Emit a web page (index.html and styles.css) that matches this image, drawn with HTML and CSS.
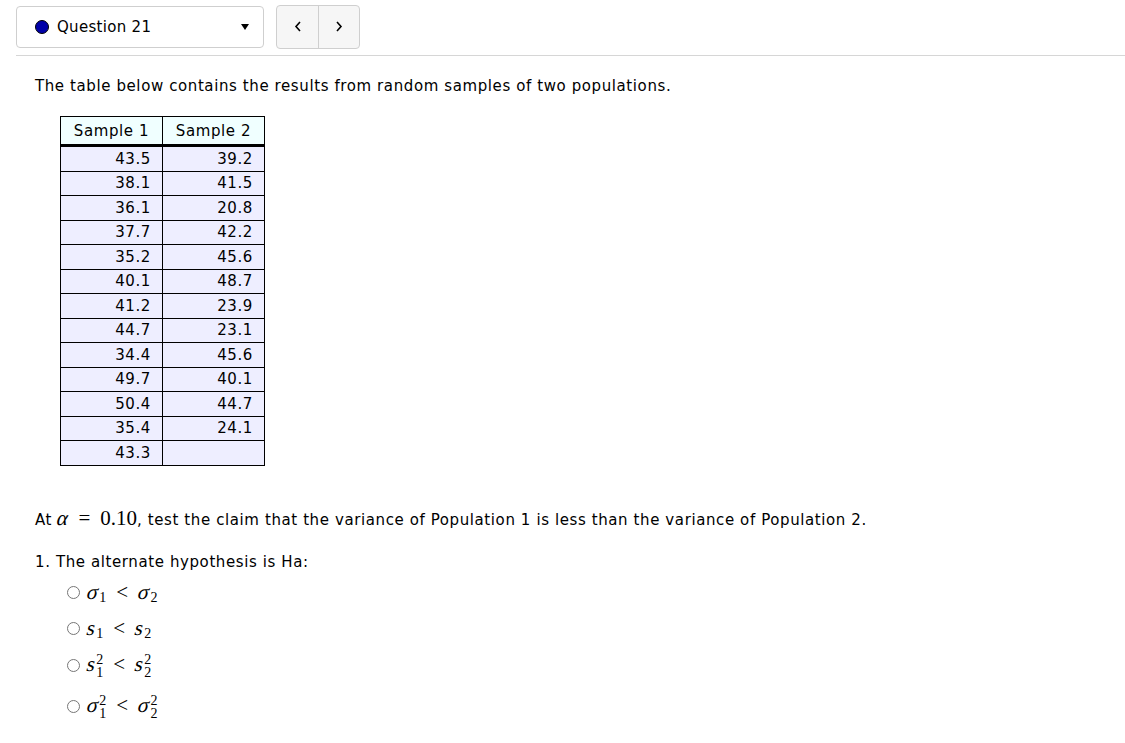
FILE: index.html
```html
<!DOCTYPE html>
<html lang="en">
<head>
    <meta charset="UTF-8">
    <title>Question 21</title>
    <link rel="stylesheet" href="styles.css">
</head>
<body>
    <div class="topbar">
        <div class="qselect">
            <span class="dot"></span>
            <span class="qname">Question 21</span>
            <span class="caret"></span>
        </div>
        <div class="nav">
            <button class="navbtn" aria-label="Previous">
                <svg width="8" height="11" viewBox="0 0 8 11"><polyline points="6,1 2,5.5 6,10" fill="none" stroke="#000" stroke-width="1.6"/></svg>
            </button>
            <button class="navbtn" aria-label="Next">
                <svg width="8" height="11" viewBox="0 0 8 11"><polyline points="2,1 6,5.5 2,10" fill="none" stroke="#000" stroke-width="1.6"/></svg>
            </button>
        </div>
    </div>

    <div class="question">
        <p class="intro">The table below contains the results from random samples of two populations.</p>

        <table class="data">
            <thead>
                <tr><th>Sample 1</th><th>Sample 2</th></tr>
            </thead>
            <tbody>
                <tr><td>43.5</td><td>39.2</td></tr>
                <tr><td>38.1</td><td>41.5</td></tr>
                <tr><td>36.1</td><td>20.8</td></tr>
                <tr><td>37.7</td><td>42.2</td></tr>
                <tr><td>35.2</td><td>45.6</td></tr>
                <tr><td>40.1</td><td>48.7</td></tr>
                <tr><td>41.2</td><td>23.9</td></tr>
                <tr><td>44.7</td><td>23.1</td></tr>
                <tr><td>34.4</td><td>45.6</td></tr>
                <tr><td>49.7</td><td>40.1</td></tr>
                <tr><td>50.4</td><td>44.7</td></tr>
                <tr><td>35.4</td><td>24.1</td></tr>
                <tr><td>43.3</td><td></td></tr>
            </tbody>
        </table>

        <p class="claim">At <span class="m"><span class="v">α</span><span class="op">=</span>0.10</span>, test the claim that the variance of Population 1 is less than the variance of Population 2.</p>

        <p class="part">1. The alternate hypothesis is Ha:</p>

        <ul class="choices">
            <li><span class="radio"></span><span class="m"><span class="v">σ</span><span class="sb">1</span><span class="op">&lt;</span><span class="v">σ</span><span class="sb">2</span></span></li>
            <li><span class="radio"></span><span class="m"><span class="v">s</span><span class="sb">1</span><span class="op">&lt;</span><span class="v">s</span><span class="sb">2</span></span></li>
            <li class="tall"><span class="radio"></span><span class="m"><span class="v">s</span><span class="ss"><span>2</span><span>1</span></span><span class="op">&lt;</span><span class="v">s</span><span class="ss"><span>2</span><span>2</span></span></span></li>
            <li class="taller"><span class="radio"></span><span class="m"><span class="v">σ</span><span class="ss"><span>2</span><span>1</span></span><span class="op">&lt;</span><span class="v">σ</span><span class="ss"><span>2</span><span>2</span></span></span></li>
        </ul>
    </div>
</body>
</html>
```

FILE: styles.css
```css
body {
    font-family: "DejaVu Sans", Verdana, sans-serif;
    font-size: 15px;
    letter-spacing: 0.6px;
    color: #000;
    background-color: #fff;
    margin: 0;
    padding: 5px 0 0 16px;
}

.topbar {
    display: flex;
    align-items: center;
    gap: 12px;
    padding-bottom: 6px;
    border-bottom: 1px solid #d6d6d6;
}

.qselect {
    display: flex;
    align-items: center;
    width: 248px;
    height: 42px;
    box-sizing: border-box;
    padding: 0 14px 0 18px;
    border: 1px solid #cfcfcf;
    border-radius: 4px;
}

.dot {
    width: 12px;
    height: 12px;
    border: 1px solid #000;
    border-radius: 50%;
    background-color: #0000a8;
    margin-right: 8px;
}

.qname {
    flex: 1;
    letter-spacing: 0.3px;
}

.caret {
    width: 0;
    height: 0;
    border-left: 4px solid transparent;
    border-right: 4px solid transparent;
    border-top: 6px solid #000;
}

.nav {
    display: flex;
    height: 42px;
    border: 1px solid #cfcfcf;
    border-radius: 4px;
    background-color: #f6f6f6;
    overflow: hidden;
}

.navbtn {
    display: flex;
    align-items: center;
    justify-content: center;
    width: 41px;
    border: none;
    background: none;
    padding: 0 0 1px 0;
}

.navbtn + .navbtn {
    border-left: 1px solid #cfcfcf;
}

.question {
    padding-left: 19px;
}

.intro {
    margin: 21px 0 21px 0;
}

.data {
    margin-left: 25px;
    border-collapse: collapse;
}

.data th {
    background-color: #f0ffff;
    font-weight: normal;
    width: 101px;
    height: 27px;
    padding: 0;
    border: 1px solid #000;
    border-bottom: 3px solid #000;
    text-align: center;
}

.data td {
    background-color: #eeeeff;
    border: 1px solid #000;
    height: 23.5px;
    padding: 0 11px 0 0;
    text-align: right;
}

.claim {
    margin: 40px 0 0 0;
}

.part {
    margin: 22px 0 0 0;
}

.m {
    font-family: "Liberation Serif", "DejaVu Serif", serif;
    font-size: 21px;
    letter-spacing: 0;
}

.v {
    display: inline-block;
    transform: skewX(-14deg);
}

.op {
    margin: 0 10px;
}

.sb {
    font-size: 14px;
    vertical-align: -3px;
    margin-left: 1px;
}

.ss {
    display: inline-flex;
    flex-direction: column;
    vertical-align: 7px;
    font-size: 14px;
    line-height: 13px;
    margin-left: 1px;
}

.choices {
    list-style: none;
    margin: 4px 0 0 0;
    padding: 0 0 0 32px;
}

.choices li {
    display: flex;
    align-items: center;
    height: 36px;
}

.choices li.tall {
    height: 38px;
}

.choices li.taller {
    height: 43px;
}

.radio {
    width: 11px;
    height: 11px;
    border: 1px solid #767676;
    border-radius: 50%;
    margin-right: 7px;
}
```
